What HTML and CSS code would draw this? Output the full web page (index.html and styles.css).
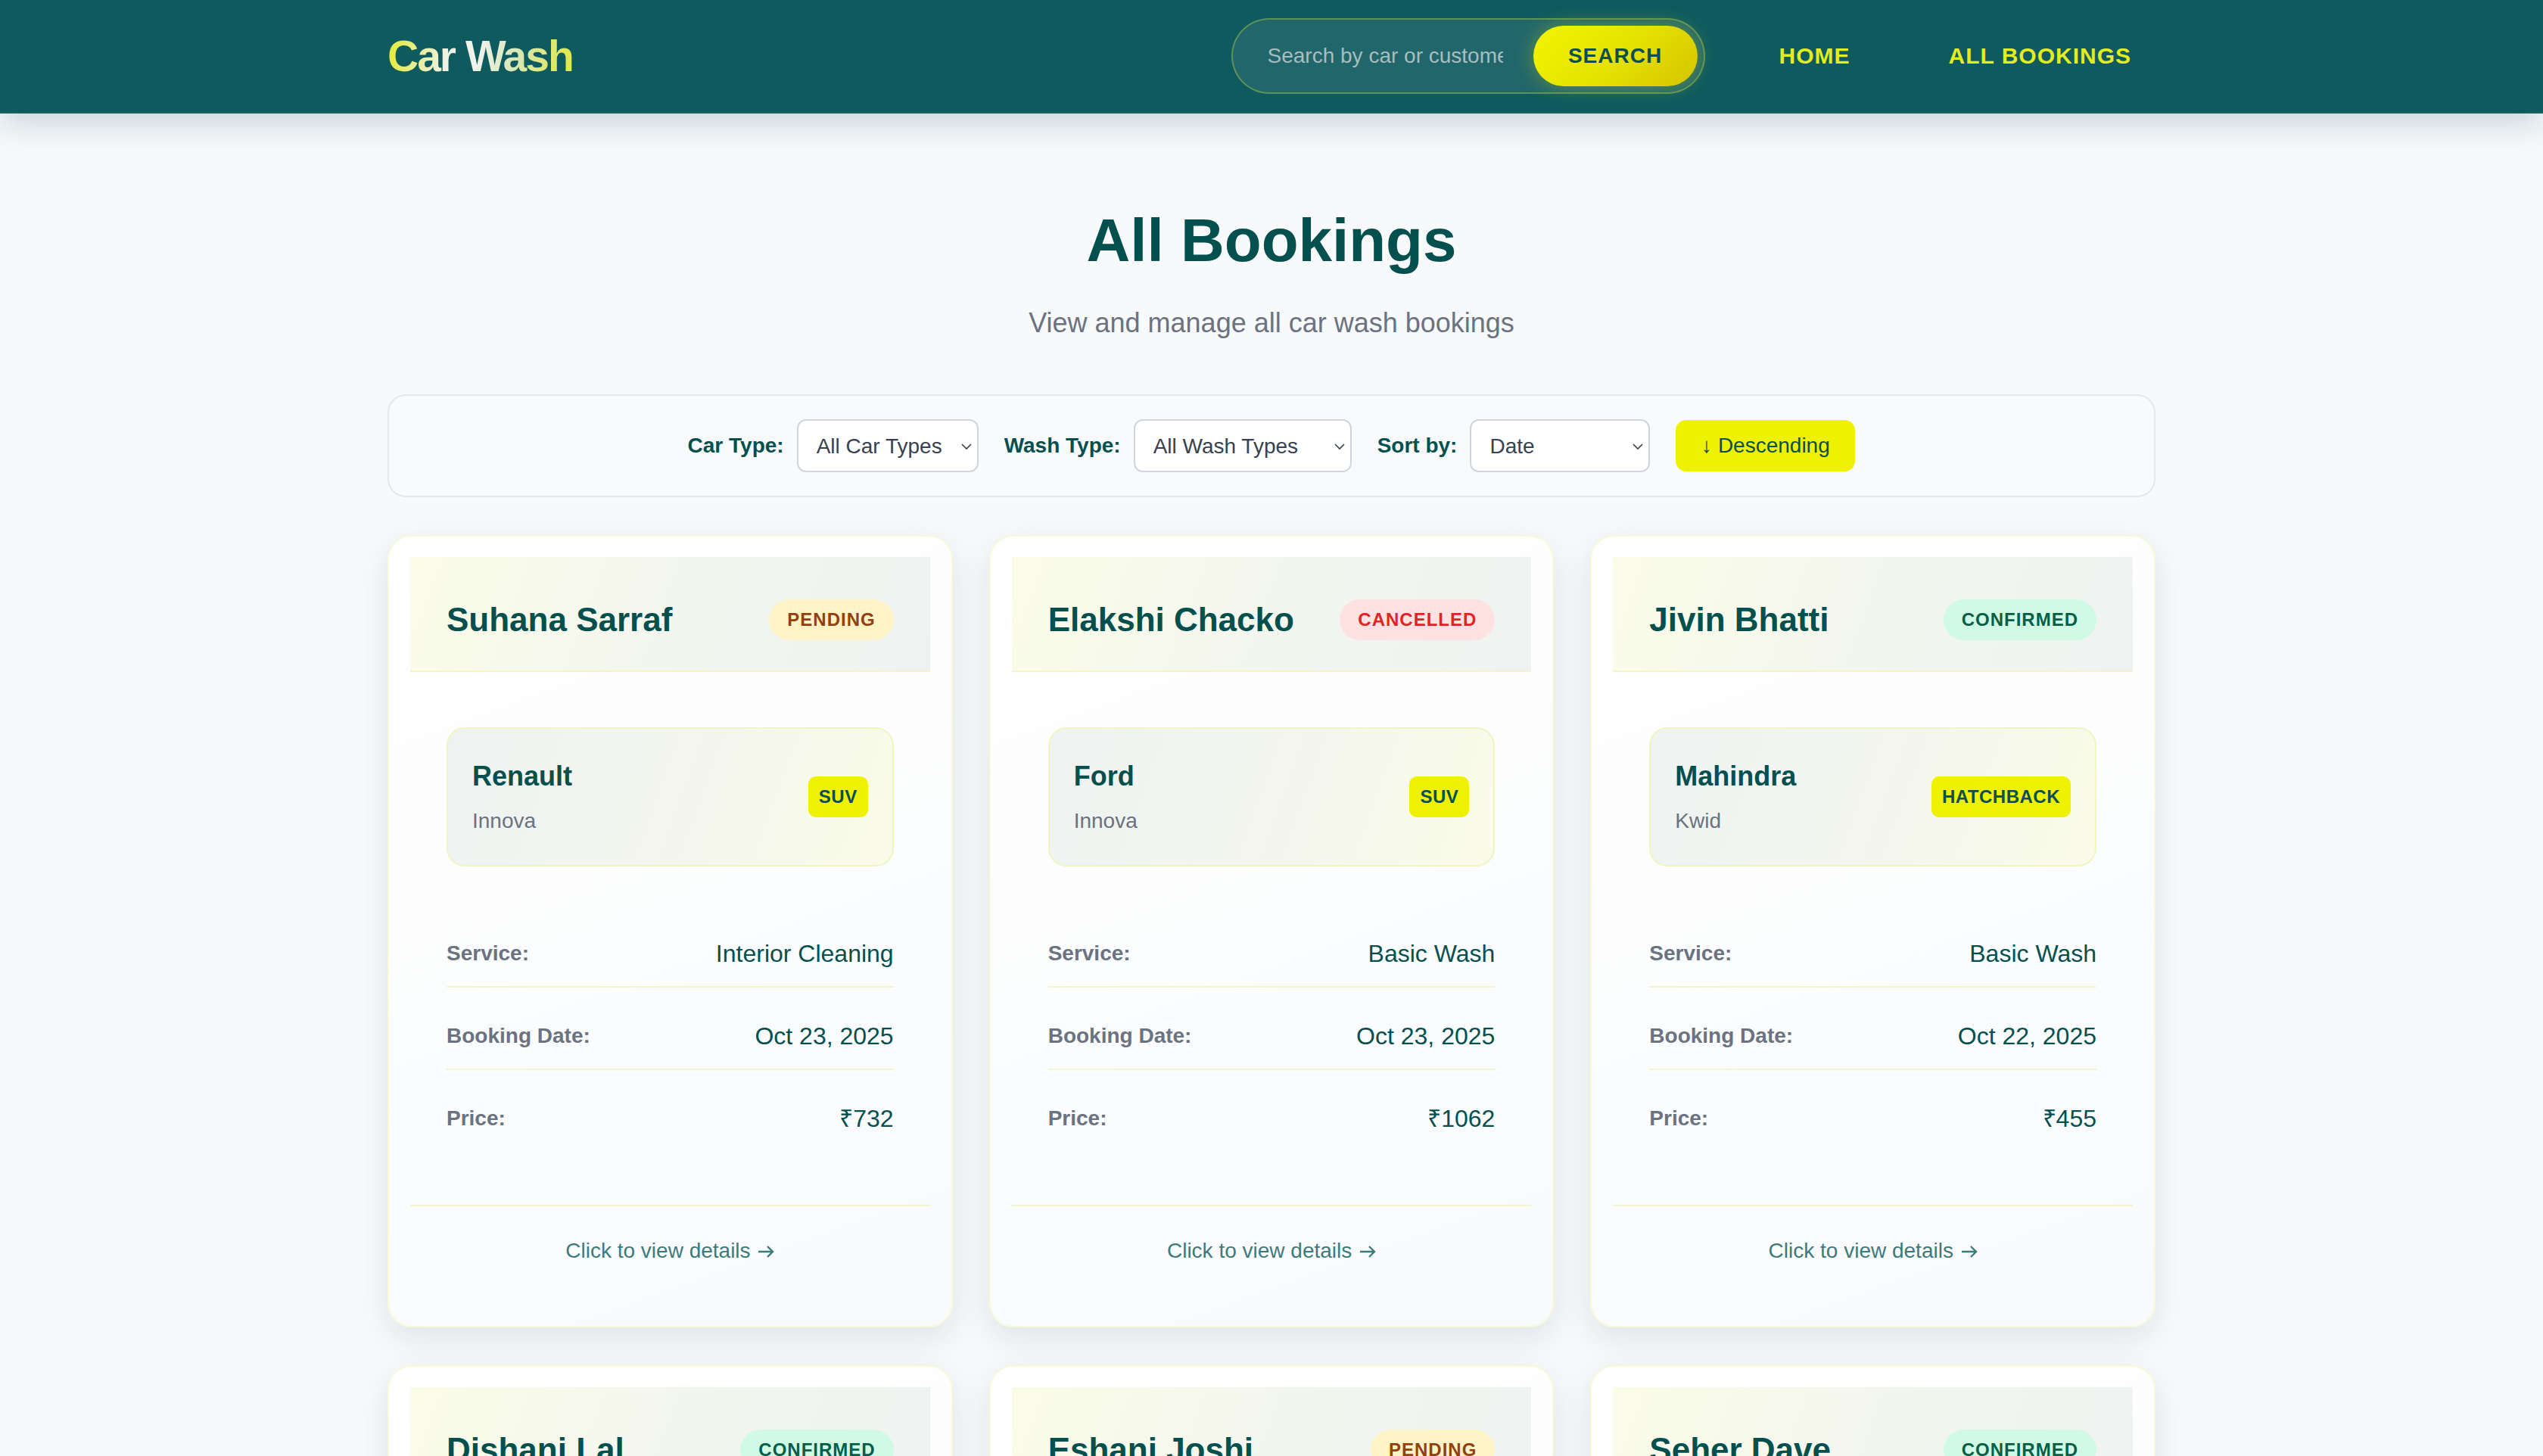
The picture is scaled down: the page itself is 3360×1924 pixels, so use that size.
FILE: index.html
```html
<!DOCTYPE html>
<html lang="en">
<head>
<meta charset="utf-8">
<title>Car Wash - All Bookings</title>
<link rel="stylesheet" href="styles.css">
</head>
<body>
<header class="topbar">
  <div class="topbar-inner">
    <div class="logo">Car Wash</div>
    <nav class="nav">
      <form class="search">
        <input class="search-input" type="text" placeholder="Search by car or customer name">
        <button class="search-btn" type="button">SEARCH</button>
      </form>
      <a class="nav-link" href="#">HOME</a>
      <a class="nav-link" href="#">ALL BOOKINGS</a>
    </nav>
  </div>
</header>

<main class="page">
  <section class="intro">
    <h1 class="title">All Bookings</h1>
    <p class="subtitle">View and manage all car wash bookings</p>
  </section>

  <section class="filters">
    <div class="filter-group">
      <label class="filter-label">Car Type:</label>
      <div class="select-wrap w-car">
        <select class="select"><option>All Car Types</option><option>SUV</option><option>Sedan</option><option>Hatchback</option></select>
        <svg class="chev" viewBox="0 0 16 10" width="16" height="10"><path d="M2 2 L8 8 L14 2" fill="none" stroke="#374151" stroke-width="1.6"/></svg>
      </div>
    </div>
    <div class="filter-group">
      <label class="filter-label">Wash Type:</label>
      <div class="select-wrap w-wash">
        <select class="select"><option>All Wash Types</option><option>Basic Wash</option><option>Interior Cleaning</option></select>
        <svg class="chev" viewBox="0 0 16 10" width="16" height="10"><path d="M2 2 L8 8 L14 2" fill="none" stroke="#374151" stroke-width="1.6"/></svg>
      </div>
    </div>
    <div class="filter-group">
      <label class="filter-label">Sort by:</label>
      <div class="select-wrap w-sort">
        <select class="select"><option>Date</option><option>Price</option><option>Customer</option></select>
        <svg class="chev" viewBox="0 0 16 10" width="16" height="10"><path d="M2 2 L8 8 L14 2" fill="none" stroke="#374151" stroke-width="1.6"/></svg>
      </div>
    </div>
    <button class="order-btn" type="button">↓ Descending</button>
  </section>

  <section class="grid">
    <article class="card">
      <div class="card-head">
        <h2 class="cust">Suhana Sarraf</h2>
        <span class="badge pending">PENDING</span>
      </div>
      <div class="card-body">
        <div class="car">
          <div class="car-info">
            <div class="brand">Renault</div>
            <div class="model">Innova</div>
          </div>
          <span class="tag">SUV</span>
        </div>
        <div class="details">
          <div class="row"><span class="lbl">Service:</span><span class="val">Interior Cleaning</span></div>
          <div class="row"><span class="lbl">Booking Date:</span><span class="val">Oct 23, 2025</span></div>
          <div class="row last"><span class="lbl">Price:</span><span class="val">₹732</span></div>
        </div>
      </div>
      <div class="card-foot">Click to view details <svg class="arrow" viewBox="0 0 22 18" width="22" height="18"><path d="M1 9 H20 M13 2 L20 9 L13 16" fill="none" stroke="currentColor" stroke-width="2.4"/></svg></div>
    </article>

    <article class="card">
      <div class="card-head">
        <h2 class="cust">Elakshi Chacko</h2>
        <span class="badge cancelled">CANCELLED</span>
      </div>
      <div class="card-body">
        <div class="car">
          <div class="car-info">
            <div class="brand">Ford</div>
            <div class="model">Innova</div>
          </div>
          <span class="tag">SUV</span>
        </div>
        <div class="details">
          <div class="row"><span class="lbl">Service:</span><span class="val">Basic Wash</span></div>
          <div class="row"><span class="lbl">Booking Date:</span><span class="val">Oct 23, 2025</span></div>
          <div class="row last"><span class="lbl">Price:</span><span class="val">₹1062</span></div>
        </div>
      </div>
      <div class="card-foot">Click to view details <svg class="arrow" viewBox="0 0 22 18" width="22" height="18"><path d="M1 9 H20 M13 2 L20 9 L13 16" fill="none" stroke="currentColor" stroke-width="2.4"/></svg></div>
    </article>

    <article class="card">
      <div class="card-head">
        <h2 class="cust">Jivin Bhatti</h2>
        <span class="badge confirmed">CONFIRMED</span>
      </div>
      <div class="card-body">
        <div class="car">
          <div class="car-info">
            <div class="brand">Mahindra</div>
            <div class="model">Kwid</div>
          </div>
          <span class="tag">HATCHBACK</span>
        </div>
        <div class="details">
          <div class="row"><span class="lbl">Service:</span><span class="val">Basic Wash</span></div>
          <div class="row"><span class="lbl">Booking Date:</span><span class="val">Oct 22, 2025</span></div>
          <div class="row last"><span class="lbl">Price:</span><span class="val">₹455</span></div>
        </div>
      </div>
      <div class="card-foot">Click to view details <svg class="arrow" viewBox="0 0 22 18" width="22" height="18"><path d="M1 9 H20 M13 2 L20 9 L13 16" fill="none" stroke="currentColor" stroke-width="2.4"/></svg></div>
    </article>

    <article class="card">
      <div class="card-head">
        <h2 class="cust">Dishani Lal</h2>
        <span class="badge confirmed">CONFIRMED</span>
      </div>
      <div class="card-body">
        <div class="car">
          <div class="car-info">
            <div class="brand">Hyundai</div>
            <div class="model">Creta</div>
          </div>
          <span class="tag">SUV</span>
        </div>
        <div class="details">
          <div class="row"><span class="lbl">Service:</span><span class="val">Basic Wash</span></div>
          <div class="row"><span class="lbl">Booking Date:</span><span class="val">Oct 21, 2025</span></div>
          <div class="row last"><span class="lbl">Price:</span><span class="val">₹520</span></div>
        </div>
      </div>
      <div class="card-foot">Click to view details <svg class="arrow" viewBox="0 0 22 18" width="22" height="18"><path d="M1 9 H20 M13 2 L20 9 L13 16" fill="none" stroke="currentColor" stroke-width="2.4"/></svg></div>
    </article>

    <article class="card">
      <div class="card-head">
        <h2 class="cust">Eshani Joshi</h2>
        <span class="badge pending">PENDING</span>
      </div>
      <div class="card-body">
        <div class="car">
          <div class="car-info">
            <div class="brand">Maruti</div>
            <div class="model">Swift</div>
          </div>
          <span class="tag">HATCHBACK</span>
        </div>
        <div class="details">
          <div class="row"><span class="lbl">Service:</span><span class="val">Interior Cleaning</span></div>
          <div class="row"><span class="lbl">Booking Date:</span><span class="val">Oct 21, 2025</span></div>
          <div class="row last"><span class="lbl">Price:</span><span class="val">₹689</span></div>
        </div>
      </div>
      <div class="card-foot">Click to view details <svg class="arrow" viewBox="0 0 22 18" width="22" height="18"><path d="M1 9 H20 M13 2 L20 9 L13 16" fill="none" stroke="currentColor" stroke-width="2.4"/></svg></div>
    </article>

    <article class="card">
      <div class="card-head">
        <h2 class="cust">Seher Dave</h2>
        <span class="badge confirmed">CONFIRMED</span>
      </div>
      <div class="card-body">
        <div class="car">
          <div class="car-info">
            <div class="brand">Tata</div>
            <div class="model">Nexon</div>
          </div>
          <span class="tag">SUV</span>
        </div>
        <div class="details">
          <div class="row"><span class="lbl">Service:</span><span class="val">Basic Wash</span></div>
          <div class="row"><span class="lbl">Booking Date:</span><span class="val">Oct 20, 2025</span></div>
          <div class="row last"><span class="lbl">Price:</span><span class="val">₹410</span></div>
        </div>
      </div>
      <div class="card-foot">Click to view details <svg class="arrow" viewBox="0 0 22 18" width="22" height="18"><path d="M1 9 H20 M13 2 L20 9 L13 16" fill="none" stroke="currentColor" stroke-width="2.4"/></svg></div>
    </article>
  </section>
</main>
</body>
</html>
```

FILE: styles.css
```css
* { box-sizing: border-box; }

html { scrollbar-width: none; }

body {
  margin: 0;
  background: #f7f9fb;
  font-family: "Liberation Sans", Arial, Helvetica, sans-serif;
  color: #04504f;
}

/* ---------- Header ---------- */
.topbar {
  background: #0f5a5f;
  border-bottom: 2px solid #1a6457;
  padding: 24px 0;
  box-shadow: 0 10px 44px rgba(15, 70, 80, 0.22);
  position: relative;
  z-index: 2;
}

.topbar-inner {
  width: 2336px;
  margin: 0 auto;
  display: flex;
  align-items: center;
  justify-content: space-between;
}

.logo {
  font-size: 57px;
  line-height: 64px;
  font-weight: 700;
  letter-spacing: -2px;
  background: linear-gradient(100deg, #e2eb2c 0%, #e6ee8a 16%, #eef2e2 32%, #f0f3ea 48%, #d9e6b8 68%, #e0ea3c 100%);
  -webkit-background-clip: text;
  background-clip: text;
  color: transparent;
}

.nav {
  display: flex;
  align-items: center;
  gap: 66px;
}

.search {
  display: flex;
  align-items: center;
  width: 626px;
  height: 100px;
  padding: 8px 8px 8px 0;
  border: 2px solid rgba(190, 215, 60, 0.38);
  border-radius: 50px;
  background: rgba(255, 255, 255, 0.08);
  margin: 0;
}

.search-input {
  width: 397px;
  height: 80px;
  padding: 0 40px 0 46px;
  border: none;
  outline: none;
  background: transparent;
  font-family: inherit;
  font-size: 28px;
  color: #e8f0f0;
}

.search-input::placeholder { color: #a7bdbf; }

.search-btn {
  width: 217px;
  height: 80px;
  border: none;
  border-radius: 40px;
  background: linear-gradient(135deg, #f2f400 0%, #e6e300 50%, #d4c400 100%);
  box-shadow: 0 0 26px rgba(225, 230, 0, 0.35);
  color: #0b4f50;
  font-family: inherit;
  font-size: 28px;
  font-weight: 700;
  letter-spacing: 1px;
  padding: 0;
}

.nav-link {
  color: #e2ec20;
  text-decoration: none;
  font-size: 30px;
  font-weight: 700;
  letter-spacing: 1px;
  padding: 0 32px;
}

/* ---------- Page ---------- */
.page {
  width: 2336px;
  margin: 0 auto;
  padding-top: 122px;
  padding-bottom: 80px;
}

.intro { text-align: center; }

.title {
  margin: 0;
  font-size: 80px;
  line-height: 92px;
  font-weight: 700;
  color: #04504f;
}

.subtitle {
  margin: 36px 0 0;
  font-size: 36px;
  line-height: 54px;
  color: #6b7280;
}

/* ---------- Filters ---------- */
.filters {
  margin-top: 67px;
  border: 2px solid #e5e7eb;
  border-radius: 24px;
  background: #f8fafc;
  padding: 31px;
  display: flex;
  justify-content: center;
  align-items: center;
  gap: 34px;
}

.filter-group {
  display: flex;
  align-items: center;
  gap: 17px;
}

.filter-label {
  font-size: 28px;
  font-weight: 700;
  color: #04504f;
}

.select-wrap {
  position: relative;
  height: 70px;
}

.w-car { width: 240px; }
.w-wash { width: 288px; }
.w-sort { width: 238px; }

.select {
  -webkit-appearance: none;
  appearance: none;
  width: 100%;
  height: 70px;
  border: 2px solid #d1d5db;
  border-radius: 12px;
  background: #ffffff;
  padding: 0 24px;
  font-family: inherit;
  font-size: 28px;
  color: #374151;
}

.chev {
  position: absolute;
  right: 8px;
  top: 31px;
  pointer-events: none;
}

.order-btn {
  width: 237px;
  height: 68px;
  border: none;
  border-radius: 14px;
  background: #eef200;
  color: #0b4f50;
  font-family: inherit;
  font-size: 28px;
  padding: 0;
}

/* ---------- Cards ---------- */
.grid {
  margin-top: 50px;
  display: grid;
  grid-template-columns: repeat(3, 1fr);
  column-gap: 48px;
  row-gap: 50px;
}

.card {
  background: linear-gradient(160deg, #ffffff 0%, #f8fafc 100%);
  border: 2px solid #f7f9d8;
  border-radius: 32px;
  padding: 27px 28px 28px;
  box-shadow: 0 14px 44px rgba(20, 50, 60, 0.10);
}

.card-head {
  display: flex;
  justify-content: space-between;
  align-items: center;
  padding: 56px 48px 40px;
  background: linear-gradient(110deg, #fbfce8 0%, #f3f6ee 50%, #eef3f2 100%);
  border-bottom: 2px solid #f3f6c4;
}

.cust {
  margin: 0;
  font-size: 44px;
  line-height: 54px;
  font-weight: 700;
  color: #04504f;
}

.badge {
  height: 54px;
  line-height: 54px;
  padding: 0 24px;
  border-radius: 27px;
  font-size: 24px;
  font-weight: 700;
  letter-spacing: 1px;
}

.pending { background: #fef3c7; color: #92400e; }
.cancelled { background: #fee2e2; color: #dc2626; }
.confirmed { background: #d1fae5; color: #065f46; }

.card-body {
  padding: 73px 48px 71px;
}

.car {
  display: flex;
  justify-content: space-between;
  align-items: center;
  height: 184px;
  padding: 0 32px;
  border: 2px solid #f1f5c0;
  border-radius: 24px;
  background: linear-gradient(110deg, #eef3f2 0%, #f4f6ee 55%, #fafbe7 100%);
  margin-bottom: 72px;
}

.car-info { padding-top: 4px; }

.brand {
  font-size: 36px;
  line-height: 44px;
  font-weight: 700;
  color: #04504f;
}

.model {
  margin-top: 16px;
  font-size: 28px;
  line-height: 42px;
  color: #6b7280;
}

.tag {
  height: 54px;
  line-height: 54px;
  padding: 0 14px;
  border-radius: 10px;
  background: #eef200;
  color: #0b4f50;
  font-size: 24px;
  font-weight: 700;
  letter-spacing: 0.5px;
}

.details {
  display: flex;
  flex-direction: column;
  gap: 21px;
}

.row {
  display: flex;
  justify-content: space-between;
  align-items: center;
  padding: 24px 0;
  border-bottom: 2px solid #f3f6cc;
}

.row.last { border-bottom: none; }

.lbl {
  font-size: 28px;
  line-height: 38px;
  font-weight: 700;
  color: #6b7280;
}

.val {
  font-size: 32px;
  line-height: 38px;
  color: #04504f;
}

.card-foot {
  border-top: 2px solid #f3f6cc;
  padding: 38px 0 50px;
  text-align: center;
  font-size: 28px;
  line-height: 42px;
  color: #3d7b7b;
}

.arrow {
  vertical-align: -1px;
  margin-left: 2px;
}
```
